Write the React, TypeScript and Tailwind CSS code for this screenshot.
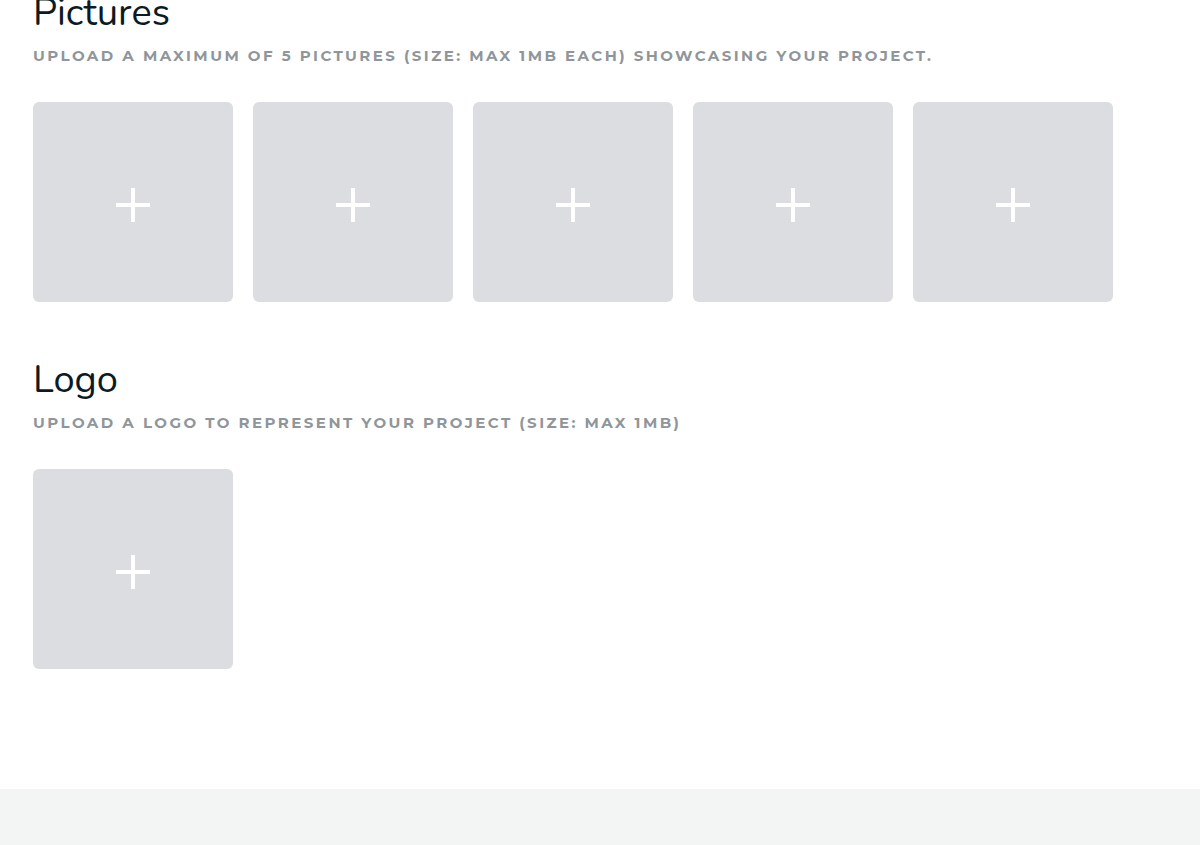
const PICTURE_SLOTS = 5;

function PlusIcon() {
  return (
    <svg width="34" height="34" viewBox="0 0 34 34" className="mt-[6px]">
      <path d="M17 0v34M0 17h34" stroke="#ffffff" strokeWidth="4" />
    </svg>
  );
}

function UploadSlot() {
  return (
    <button className="flex items-center justify-center w-[200px] h-[200px] rounded-[6px] bg-[#dcdde0]">
      <PlusIcon />
    </button>
  );
}

function Section({ title, hint, slots }: { title: string; hint: string; slots: number }) {
  return (
    <section>
      <h2 className="text-[38px] leading-[44px] text-[#0b1a24] font-['Nunito','Noto_Sans',sans-serif]">{title}</h2>
      <p className="mt-[11px] text-[15px] leading-[20px] font-bold tracking-[2.45px] uppercase text-[#8f969b] font-['Montserrat','Open_Sans',sans-serif]">
        {hint}
      </p>
      <div className="flex gap-[20px] mt-[36px]">
        {Array.from({ length: slots }).map((_, i) => (
          <UploadSlot key={i} />
        ))}
      </div>
    </section>
  );
}

export default function App() {
  return (
    <div className="min-h-[845px] bg-white flex flex-col">
      <div className="px-[33px] -mt-[9px] flex flex-col gap-[56px] pb-[120px]">
        <Section
          title="Pictures"
          hint="Upload a maximum of 5 pictures (size: max 1mb each) showcasing your project."
          slots={PICTURE_SLOTS}
        />
        <Section
          title="Logo"
          hint="Upload a logo to represent your project (size: max 1mb)"
          slots={1}
        />
      </div>
      <footer className="flex-1 min-h-[56px] bg-[#f3f5f4]" />
    </div>
  );
}
